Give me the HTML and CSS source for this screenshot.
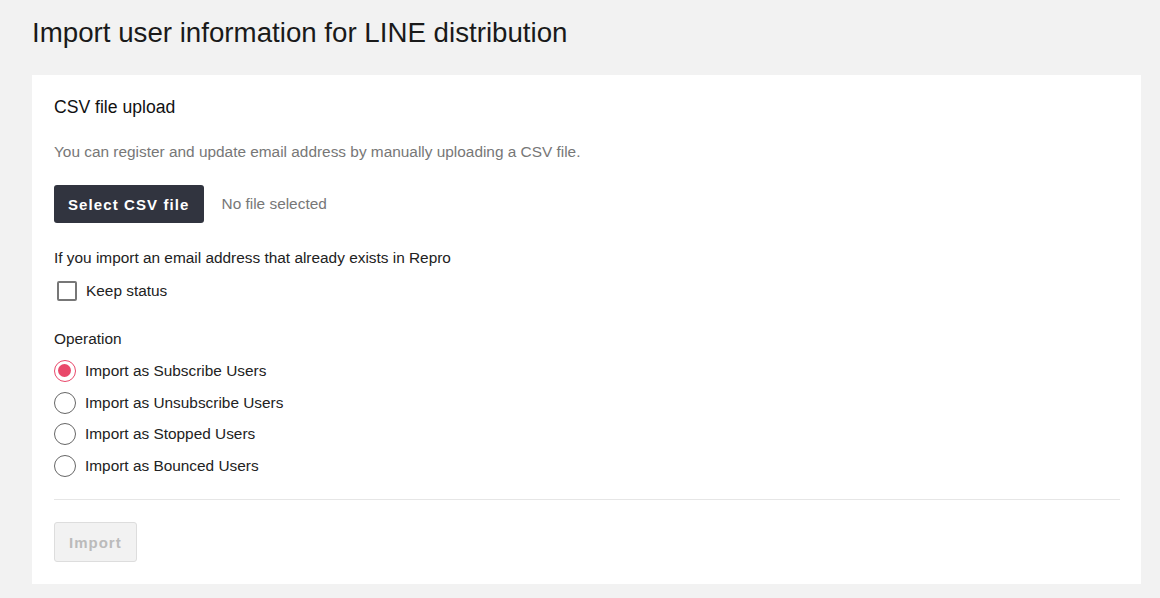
FILE: index.html
```html
<!DOCTYPE html>
<html lang="en">
<head>
    <meta charset="UTF-8">
    <title>Import user information for LINE distribution</title>
    <link rel="stylesheet" href="styles.css">
</head>
<body>
    <h1 class="page-title">Import user information for LINE distribution</h1>
    <div class="card">
        <h2 class="card-title">CSV file upload</h2>
        <p class="description">You can register and update email address by manually uploading a CSV file.</p>
        <div class="file-row">
            <button class="btn-dark">Select CSV file</button>
            <span class="file-name">No file selected</span>
        </div>
        <p class="label">If you import an email address that already exists in Repro</p>
        <label class="check">
            <span class="check-box"></span>
            Keep status
        </label>
        <p class="label label-op">Operation</p>
        <div class="radios">
            <label class="radio"><span class="radio-circle checked"></span>Import as Subscribe Users</label>
            <label class="radio"><span class="radio-circle"></span>Import as Unsubscribe Users</label>
            <label class="radio"><span class="radio-circle"></span>Import as Stopped Users</label>
            <label class="radio"><span class="radio-circle"></span>Import as Bounced Users</label>
        </div>
        <hr class="divider">
        <button class="btn-disabled" disabled>Import</button>
    </div>
</body>
</html>
```

FILE: styles.css
```css
body {
    margin: 0;
    padding: 0 19px 14px 32px;
    background-color: #f2f2f2;
    font-family: "Liberation Sans", Arial, sans-serif;
    font-size: 15.4px;
    color: #222;
}
.page-title {
    margin: 0;
    padding: 16px 0 26px;
    font-size: 27.7px;
    font-weight: normal;
    line-height: 33px;
    color: #1a1a1a;
}
.card {
    background-color: #fff;
    padding: 20px 21px 22px 22px;
}
.card-title {
    margin: 0;
    font-size: 17.6px;
    font-weight: normal;
    line-height: 24px;
    color: #111;
}
.description {
    margin: 23px 0 0;
    line-height: 20px;
    color: #777;
}
.file-row {
    display: flex;
    align-items: center;
    gap: 18px;
    margin-top: 23px;
}
.btn-dark {
    height: 38px;
    padding: 0 14px;
    border: none;
    border-radius: 3px;
    background-color: #31343f;
    color: #fff;
    font-family: inherit;
    font-size: 15px;
    font-weight: bold;
    letter-spacing: 1.1px;
}
.file-name {
    color: #777;
}
.label {
    margin: 25px 0 0;
    line-height: 20px;
}
.check {
    display: flex;
    align-items: center;
    gap: 9px;
    margin-top: 13px;
    padding-left: 3px;
}
.check-box {
    width: 16px;
    height: 16px;
    border: 2px solid #777;
    border-radius: 2px;
}
.label-op {
    margin-top: 28px;
}
.radios {
    display: flex;
    flex-direction: column;
    gap: 9.7px;
    margin-top: 11px;
}
.radio {
    display: flex;
    align-items: center;
    gap: 9px;
    line-height: 22px;
}
.radio-circle {
    box-sizing: border-box;
    width: 22px;
    height: 22px;
    border: 1.5px solid #666;
    border-radius: 50%;
    position: relative;
}
.radio-circle.checked {
    border-color: #e9486a;
}
.radio-circle.checked::after {
    content: "";
    position: absolute;
    left: 3px;
    top: 3px;
    width: 13px;
    height: 13px;
    border-radius: 50%;
    background-color: #e9486a;
}
.divider {
    margin: 22px 0 0;
    border: none;
    border-top: 1px solid #e6e6e6;
}
.btn-disabled {
    margin-top: 22px;
    height: 40px;
    padding: 0 14px;
    border: 1px solid #ddd;
    border-radius: 3px;
    background-color: #f2f2f2;
    color: #bbb;
    font-family: inherit;
    font-size: 15px;
    font-weight: bold;
    letter-spacing: 1px;
}
```
